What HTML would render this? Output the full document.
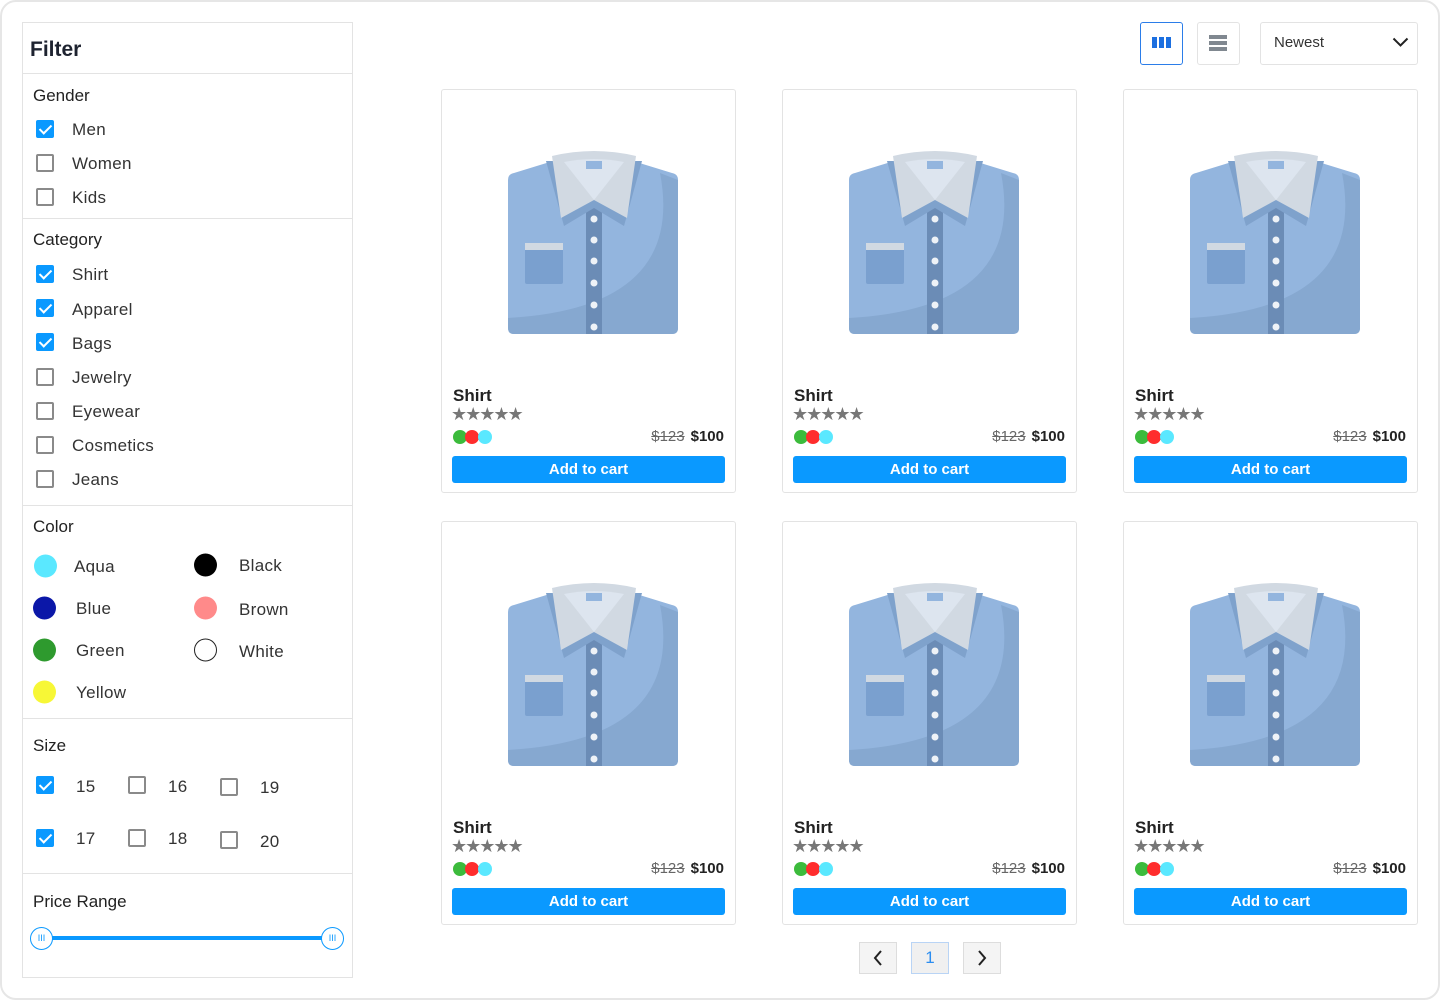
<!DOCTYPE html>
<html><head><meta charset="utf-8"><style>
*{box-sizing:border-box;margin:0;padding:0}
body{width:1440px;height:1000px;background:#fff;font-family:"Liberation Sans",sans-serif;color:#222;position:relative;overflow:hidden}
.frame{position:absolute;left:0;top:0;width:1440px;height:1000px;border:2px solid #e6e6e6;border-radius:16px}
.a{position:absolute}
.panel{position:absolute;left:22px;top:22px;width:331px;height:956px;border:1px solid #e3e3e3}
.hl{position:absolute;left:23px;width:329px;height:1px;background:#e3e3e3}
.h{position:absolute;left:33px;font-size:17px;color:#222;transform:translateY(-50%);margin-top:1px}
.cb{position:absolute;width:18px;height:18px;border:2px solid #8a8a8a;border-radius:2px;transform:translateY(-50%)}
.cb.on{background:#0a99ff;border-color:#0a99ff}
.cb.on::after{content:"";position:absolute;left:4px;top:0px;width:5px;height:10px;border:solid #fff;border-width:0 2px 2px 0;transform:rotate(45deg)}
.lb{position:absolute;font-size:17px;color:#333;transform:translateY(-50%);letter-spacing:.3px;margin-top:1px}
.dot{position:absolute;width:23px;height:23px;border-radius:50%;transform:translateY(-50%)}
.card{position:absolute;width:295px;height:404px;border:1px solid #e3e3e3;border-radius:3px;background:#fff}
.card svg{position:absolute;left:66px;top:58px}
.nm{position:absolute;left:11px;top:296px;font-size:17px;font-weight:bold;color:#222}
.st{position:absolute;left:9px;top:314px;font-size:18px;color:#777;letter-spacing:-2px;line-height:20px}
.cd{position:absolute;top:340px;width:14px;height:14px;border-radius:50%}
.pr{position:absolute;right:11px;top:338px;font-size:15px}
.pr s{color:#666;margin-right:6px}
.pr b{color:#222}
.btn{position:absolute;left:10px;top:366px;width:273px;height:27px;background:#0a99ff;border-radius:3px;color:#fff;font-weight:bold;font-size:15px;text-align:center;line-height:27px}
.pg{position:absolute;top:942px;width:38px;height:32px;border:1px solid #ddd;background:#f4f4f4;text-align:center;line-height:30px;font-size:17px}
</style></head><body>
<div class="frame"></div>
<div class="panel"></div>
<div class="a" style="left:30px;top:38px;font-size:21px;font-weight:bold;color:#1e2330">Filter</div>
<div class="hl" style="top:73px"></div>
<div class="h" style="top:95px">Gender</div>
<div class="cb on" style="left:36px;top:129px"></div><div class="lb" style="left:72px;top:129px">Men</div>
<div class="cb" style="left:36px;top:163px"></div><div class="lb" style="left:72px;top:163px">Women</div>
<div class="cb" style="left:36px;top:197px"></div><div class="lb" style="left:72px;top:197px">Kids</div>
<div class="hl" style="top:218px"></div>
<div class="h" style="top:239px">Category</div>
<div class="cb on" style="left:36px;top:274px"></div><div class="lb" style="left:72px;top:274px">Shirt</div>
<div class="cb on" style="left:36px;top:308px"></div><div class="lb" style="left:72px;top:309px">Apparel</div>
<div class="cb on" style="left:36px;top:342px"></div><div class="lb" style="left:72px;top:343px">Bags</div>
<div class="cb" style="left:36px;top:377px"></div><div class="lb" style="left:72px;top:377px">Jewelry</div>
<div class="cb" style="left:36px;top:411px"></div><div class="lb" style="left:72px;top:411px">Eyewear</div>
<div class="cb" style="left:36px;top:445px"></div><div class="lb" style="left:72px;top:445px">Cosmetics</div>
<div class="cb" style="left:36px;top:479px"></div><div class="lb" style="left:72px;top:479px">Jeans</div>
<div class="hl" style="top:505px"></div>
<div class="h" style="top:526px">Color</div>
<div class="dot" style="left:34px;top:566px;background:#5ae8ff"></div><div class="lb" style="left:74px;top:566px">Aqua</div>
<div class="dot" style="left:33px;top:608px;background:#0b17a8"></div><div class="lb" style="left:76px;top:608px">Blue</div>
<div class="dot" style="left:33px;top:650px;background:#2e9a2e"></div><div class="lb" style="left:76px;top:650px">Green</div>
<div class="dot" style="left:33px;top:692px;background:#f7f736"></div><div class="lb" style="left:76px;top:692px">Yellow</div>
<div class="dot" style="left:194px;top:565px;background:#000"></div><div class="lb" style="left:239px;top:565px">Black</div>
<div class="dot" style="left:194px;top:608px;background:#ff8a8a"></div><div class="lb" style="left:239px;top:609px">Brown</div>
<div class="dot" style="left:194px;top:650px;border:1.5px solid #222"></div><div class="lb" style="left:239px;top:651px">White</div>
<div class="hl" style="top:718px"></div>
<div class="h" style="top:745px">Size</div>
<div class="cb on" style="left:36px;top:785px"></div><div class="lb" style="left:76px;top:786px">15</div>
<div class="cb" style="left:128px;top:785px"></div><div class="lb" style="left:168px;top:786px">16</div>
<div class="cb" style="left:220px;top:787px"></div><div class="lb" style="left:260px;top:787px">19</div>
<div class="cb on" style="left:36px;top:838px"></div><div class="lb" style="left:76px;top:838px">17</div>
<div class="cb" style="left:128px;top:838px"></div><div class="lb" style="left:168px;top:838px">18</div>
<div class="cb" style="left:220px;top:840px"></div><div class="lb" style="left:260px;top:841px">20</div>
<div class="hl" style="top:873px"></div>
<div class="h" style="top:901px">Price Range</div>
<div class="a" style="left:42px;top:936px;width:290px;height:4px;background:#0a99ff"></div>
<div class="a" style="left:30px;top:927px;width:23px;height:23px;border:1.5px solid #0a99ff;border-radius:50%;background:#fff;color:#0a99ff;font-size:9px;text-align:center;line-height:20px">III</div>
<div class="a" style="left:321px;top:927px;width:23px;height:23px;border:1.5px solid #0a99ff;border-radius:50%;background:#fff;color:#0a99ff;font-size:9px;text-align:center;line-height:20px">III</div>

<!-- toolbar -->
<div class="a" style="left:1140px;top:22px;width:43px;height:43px;border:1px solid #2b7de9;border-radius:3px"></div>
<div class="a" style="left:1152px;top:37px;width:5px;height:11px;background:#1c6fe0"></div>
<div class="a" style="left:1159px;top:37px;width:5px;height:11px;background:#1c6fe0"></div>
<div class="a" style="left:1166px;top:37px;width:5px;height:11px;background:#1c6fe0"></div>
<div class="a" style="left:1197px;top:22px;width:43px;height:43px;border:1px solid #e3e3e3;border-radius:3px"></div>
<div class="a" style="left:1209px;top:35px;width:18px;height:4px;background:#808890"></div>
<div class="a" style="left:1209px;top:41px;width:18px;height:4px;background:#808890"></div>
<div class="a" style="left:1209px;top:47px;width:18px;height:4px;background:#808890"></div>
<div class="a" style="left:1260px;top:22px;width:158px;height:43px;border:1px solid #e3e3e3;border-radius:3px"></div>
<div class="a" style="left:1274px;top:34px;font-size:15px;color:#333">Newest</div>
<svg class="a" style="left:1392px;top:36px" width="17" height="12" viewBox="0 0 17 12"><path d="M1.5 2.5 L8.5 9.5 L15.5 2.5" fill="none" stroke="#222" stroke-width="2"/></svg>

<!-- cards -->
<div class="card" style="left:441px;top:89px">
<svg width="170" height="186" viewBox="0 0 170 186"><path d="M0 32Q0 26 6 25L45 13L125 13L164 25Q170 26 170 32L170 180Q170 186 164 186L6 186Q0 186 0 180Z" fill="#93b5de"/><path d="M152 25Q178 160 0 170L0 180Q0 186 6 186L164 186Q170 186 170 180L170 32Z" fill="#86a8d0"/><rect x="78" y="50" width="16" height="136" fill="#6b8cb6"/><g fill="#eef2f7"><circle cx="86" cy="71" r="3.5"/><circle cx="86" cy="92" r="3.5"/><circle cx="86" cy="113" r="3.5"/><circle cx="86" cy="135" r="3.5"/><circle cx="86" cy="157" r="3.5"/><circle cx="86" cy="179" r="3.5"/></g><path d="M38 13L56 78L86 60L116 78L134 13Z" fill="#7fa2cc"/><path d="M44 8Q86 -2 128 8L119 70L86 52L53 70Z" fill="#d1d9e2"/><path d="M56 14Q86 8 116 14L86 52Z" fill="#dde5ef"/><rect x="78" y="13" width="16" height="8" fill="#93b5de"/><rect x="17" y="95" width="38" height="41" rx="2" fill="#7aa0cf"/><rect x="17" y="95" width="38" height="7" fill="#d1d9e2"/></svg>
<div class="nm">Shirt</div><div class="st">★★★★★</div>
<div class="cd" style="left:11px;background:#3cbb3c"></div><div class="cd" style="left:23px;background:#ff2d2d"></div><div class="cd" style="left:36px;background:#5ae8ff"></div>
<div class="pr"><s>$123</s><b>$100</b></div><div class="btn">Add to cart</div></div>
<div class="card" style="left:782px;top:89px">
<svg width="170" height="186" viewBox="0 0 170 186"><path d="M0 32Q0 26 6 25L45 13L125 13L164 25Q170 26 170 32L170 180Q170 186 164 186L6 186Q0 186 0 180Z" fill="#93b5de"/><path d="M152 25Q178 160 0 170L0 180Q0 186 6 186L164 186Q170 186 170 180L170 32Z" fill="#86a8d0"/><rect x="78" y="50" width="16" height="136" fill="#6b8cb6"/><g fill="#eef2f7"><circle cx="86" cy="71" r="3.5"/><circle cx="86" cy="92" r="3.5"/><circle cx="86" cy="113" r="3.5"/><circle cx="86" cy="135" r="3.5"/><circle cx="86" cy="157" r="3.5"/><circle cx="86" cy="179" r="3.5"/></g><path d="M38 13L56 78L86 60L116 78L134 13Z" fill="#7fa2cc"/><path d="M44 8Q86 -2 128 8L119 70L86 52L53 70Z" fill="#d1d9e2"/><path d="M56 14Q86 8 116 14L86 52Z" fill="#dde5ef"/><rect x="78" y="13" width="16" height="8" fill="#93b5de"/><rect x="17" y="95" width="38" height="41" rx="2" fill="#7aa0cf"/><rect x="17" y="95" width="38" height="7" fill="#d1d9e2"/></svg>
<div class="nm">Shirt</div><div class="st">★★★★★</div>
<div class="cd" style="left:11px;background:#3cbb3c"></div><div class="cd" style="left:23px;background:#ff2d2d"></div><div class="cd" style="left:36px;background:#5ae8ff"></div>
<div class="pr"><s>$123</s><b>$100</b></div><div class="btn">Add to cart</div></div>
<div class="card" style="left:1123px;top:89px">
<svg width="170" height="186" viewBox="0 0 170 186"><path d="M0 32Q0 26 6 25L45 13L125 13L164 25Q170 26 170 32L170 180Q170 186 164 186L6 186Q0 186 0 180Z" fill="#93b5de"/><path d="M152 25Q178 160 0 170L0 180Q0 186 6 186L164 186Q170 186 170 180L170 32Z" fill="#86a8d0"/><rect x="78" y="50" width="16" height="136" fill="#6b8cb6"/><g fill="#eef2f7"><circle cx="86" cy="71" r="3.5"/><circle cx="86" cy="92" r="3.5"/><circle cx="86" cy="113" r="3.5"/><circle cx="86" cy="135" r="3.5"/><circle cx="86" cy="157" r="3.5"/><circle cx="86" cy="179" r="3.5"/></g><path d="M38 13L56 78L86 60L116 78L134 13Z" fill="#7fa2cc"/><path d="M44 8Q86 -2 128 8L119 70L86 52L53 70Z" fill="#d1d9e2"/><path d="M56 14Q86 8 116 14L86 52Z" fill="#dde5ef"/><rect x="78" y="13" width="16" height="8" fill="#93b5de"/><rect x="17" y="95" width="38" height="41" rx="2" fill="#7aa0cf"/><rect x="17" y="95" width="38" height="7" fill="#d1d9e2"/></svg>
<div class="nm">Shirt</div><div class="st">★★★★★</div>
<div class="cd" style="left:11px;background:#3cbb3c"></div><div class="cd" style="left:23px;background:#ff2d2d"></div><div class="cd" style="left:36px;background:#5ae8ff"></div>
<div class="pr"><s>$123</s><b>$100</b></div><div class="btn">Add to cart</div></div>
<div class="card" style="left:441px;top:521px">
<svg width="170" height="186" viewBox="0 0 170 186"><path d="M0 32Q0 26 6 25L45 13L125 13L164 25Q170 26 170 32L170 180Q170 186 164 186L6 186Q0 186 0 180Z" fill="#93b5de"/><path d="M152 25Q178 160 0 170L0 180Q0 186 6 186L164 186Q170 186 170 180L170 32Z" fill="#86a8d0"/><rect x="78" y="50" width="16" height="136" fill="#6b8cb6"/><g fill="#eef2f7"><circle cx="86" cy="71" r="3.5"/><circle cx="86" cy="92" r="3.5"/><circle cx="86" cy="113" r="3.5"/><circle cx="86" cy="135" r="3.5"/><circle cx="86" cy="157" r="3.5"/><circle cx="86" cy="179" r="3.5"/></g><path d="M38 13L56 78L86 60L116 78L134 13Z" fill="#7fa2cc"/><path d="M44 8Q86 -2 128 8L119 70L86 52L53 70Z" fill="#d1d9e2"/><path d="M56 14Q86 8 116 14L86 52Z" fill="#dde5ef"/><rect x="78" y="13" width="16" height="8" fill="#93b5de"/><rect x="17" y="95" width="38" height="41" rx="2" fill="#7aa0cf"/><rect x="17" y="95" width="38" height="7" fill="#d1d9e2"/></svg>
<div class="nm">Shirt</div><div class="st">★★★★★</div>
<div class="cd" style="left:11px;background:#3cbb3c"></div><div class="cd" style="left:23px;background:#ff2d2d"></div><div class="cd" style="left:36px;background:#5ae8ff"></div>
<div class="pr"><s>$123</s><b>$100</b></div><div class="btn">Add to cart</div></div>
<div class="card" style="left:782px;top:521px">
<svg width="170" height="186" viewBox="0 0 170 186"><path d="M0 32Q0 26 6 25L45 13L125 13L164 25Q170 26 170 32L170 180Q170 186 164 186L6 186Q0 186 0 180Z" fill="#93b5de"/><path d="M152 25Q178 160 0 170L0 180Q0 186 6 186L164 186Q170 186 170 180L170 32Z" fill="#86a8d0"/><rect x="78" y="50" width="16" height="136" fill="#6b8cb6"/><g fill="#eef2f7"><circle cx="86" cy="71" r="3.5"/><circle cx="86" cy="92" r="3.5"/><circle cx="86" cy="113" r="3.5"/><circle cx="86" cy="135" r="3.5"/><circle cx="86" cy="157" r="3.5"/><circle cx="86" cy="179" r="3.5"/></g><path d="M38 13L56 78L86 60L116 78L134 13Z" fill="#7fa2cc"/><path d="M44 8Q86 -2 128 8L119 70L86 52L53 70Z" fill="#d1d9e2"/><path d="M56 14Q86 8 116 14L86 52Z" fill="#dde5ef"/><rect x="78" y="13" width="16" height="8" fill="#93b5de"/><rect x="17" y="95" width="38" height="41" rx="2" fill="#7aa0cf"/><rect x="17" y="95" width="38" height="7" fill="#d1d9e2"/></svg>
<div class="nm">Shirt</div><div class="st">★★★★★</div>
<div class="cd" style="left:11px;background:#3cbb3c"></div><div class="cd" style="left:23px;background:#ff2d2d"></div><div class="cd" style="left:36px;background:#5ae8ff"></div>
<div class="pr"><s>$123</s><b>$100</b></div><div class="btn">Add to cart</div></div>
<div class="card" style="left:1123px;top:521px">
<svg width="170" height="186" viewBox="0 0 170 186"><path d="M0 32Q0 26 6 25L45 13L125 13L164 25Q170 26 170 32L170 180Q170 186 164 186L6 186Q0 186 0 180Z" fill="#93b5de"/><path d="M152 25Q178 160 0 170L0 180Q0 186 6 186L164 186Q170 186 170 180L170 32Z" fill="#86a8d0"/><rect x="78" y="50" width="16" height="136" fill="#6b8cb6"/><g fill="#eef2f7"><circle cx="86" cy="71" r="3.5"/><circle cx="86" cy="92" r="3.5"/><circle cx="86" cy="113" r="3.5"/><circle cx="86" cy="135" r="3.5"/><circle cx="86" cy="157" r="3.5"/><circle cx="86" cy="179" r="3.5"/></g><path d="M38 13L56 78L86 60L116 78L134 13Z" fill="#7fa2cc"/><path d="M44 8Q86 -2 128 8L119 70L86 52L53 70Z" fill="#d1d9e2"/><path d="M56 14Q86 8 116 14L86 52Z" fill="#dde5ef"/><rect x="78" y="13" width="16" height="8" fill="#93b5de"/><rect x="17" y="95" width="38" height="41" rx="2" fill="#7aa0cf"/><rect x="17" y="95" width="38" height="7" fill="#d1d9e2"/></svg>
<div class="nm">Shirt</div><div class="st">★★★★★</div>
<div class="cd" style="left:11px;background:#3cbb3c"></div><div class="cd" style="left:23px;background:#ff2d2d"></div><div class="cd" style="left:36px;background:#5ae8ff"></div>
<div class="pr"><s>$123</s><b>$100</b></div><div class="btn">Add to cart</div></div>

<!-- pagination -->
<div class="pg" style="left:859px"><svg width="12" height="18" viewBox="0 0 12 18" style="margin-top:6px"><path d="M9 2L3 9L9 16" fill="none" stroke="#222" stroke-width="2"/></svg></div>
<div class="pg" style="left:911px;border-color:#b9d4f5;background:#f0f0f0;color:#2b8df0">1</div>
<div class="pg" style="left:963px"><svg width="12" height="18" viewBox="0 0 12 18" style="margin-top:6px"><path d="M3 2L9 9L3 16" fill="none" stroke="#222" stroke-width="2"/></svg></div>
</body></html>
